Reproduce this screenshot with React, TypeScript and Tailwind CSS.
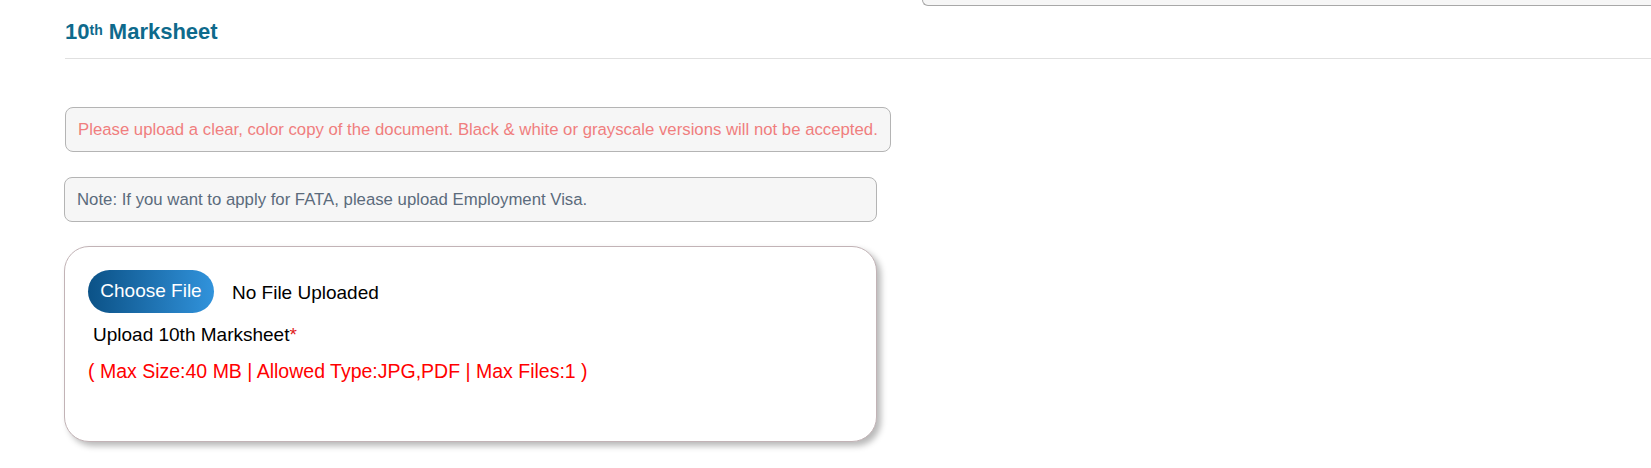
export default function App() {
  return (
    <div className="w-[1651px] h-[468px] overflow-hidden bg-white font-['Liberation_Sans',Arial,sans-serif]">
      {/* tail of the previous section */}
      <div className="ml-[922px] h-[6px] border-b border-l border-[#a8a8a8] rounded-bl-[8px] bg-[#f6f6f6]" />

      <div className="pl-[65px]">
        <h2 className="mt-[15px] pb-[16px] border-b border-[#e0e0e0] text-[22px] leading-[21px] font-bold text-[#0e6a8c]">
          10<sup className="text-[14px] relative -top-[4px]">th</sup> Marksheet
        </h2>
      </div>

      <div className="pl-[64px] pt-[48px] flex flex-col items-start">
        <div className="ml-[1px] h-[45px] flex items-center px-[12px] border border-[#b4b4b4] rounded-[8px] bg-[#f6f6f6] text-[16.75px] text-[#f07e7e]">
          Please upload a clear, color copy of the document. Black &amp; white or grayscale versions will not be accepted.
        </div>

        <div className="mt-[25px] w-[813px] h-[45px] flex items-center px-[12px] border border-[#b4b4b4] rounded-[8px] bg-[#f6f6f6] text-[16.75px] text-[#5b6b7c]">
          Note: If you want to apply for FATA, please upload Employment Visa.
        </div>

        <div className="mt-[24px] w-[813px] h-[196px] px-[23px] pt-[23px] border border-[#c2b3b6] rounded-[25px] bg-white shadow-[4px_4px_6px_rgba(0,0,0,0.28)]">
          <div className="flex items-center">
            <button className="h-[43px] w-[126px] rounded-full bg-gradient-to-r from-[#0b5287] to-[#3193dc] text-white text-[19px] leading-[19px] pb-[3px]">
              Choose File
            </button>
            <span className="ml-[18px] mt-[4px] text-[19px] text-black">No File Uploaded</span>
          </div>
          <div className="mt-[11px] ml-[5px] text-[19px] leading-[22px] text-black">
            Upload 10th Marksheet<span className="text-[#e02020]">*</span>
          </div>
          <div className="mt-[14px] text-[19.5px] leading-[22px] text-[#ff0000]">
            ( Max Size:40 MB | Allowed Type:JPG,PDF | Max Files:1 )
          </div>
        </div>
      </div>
    </div>
  );
}
